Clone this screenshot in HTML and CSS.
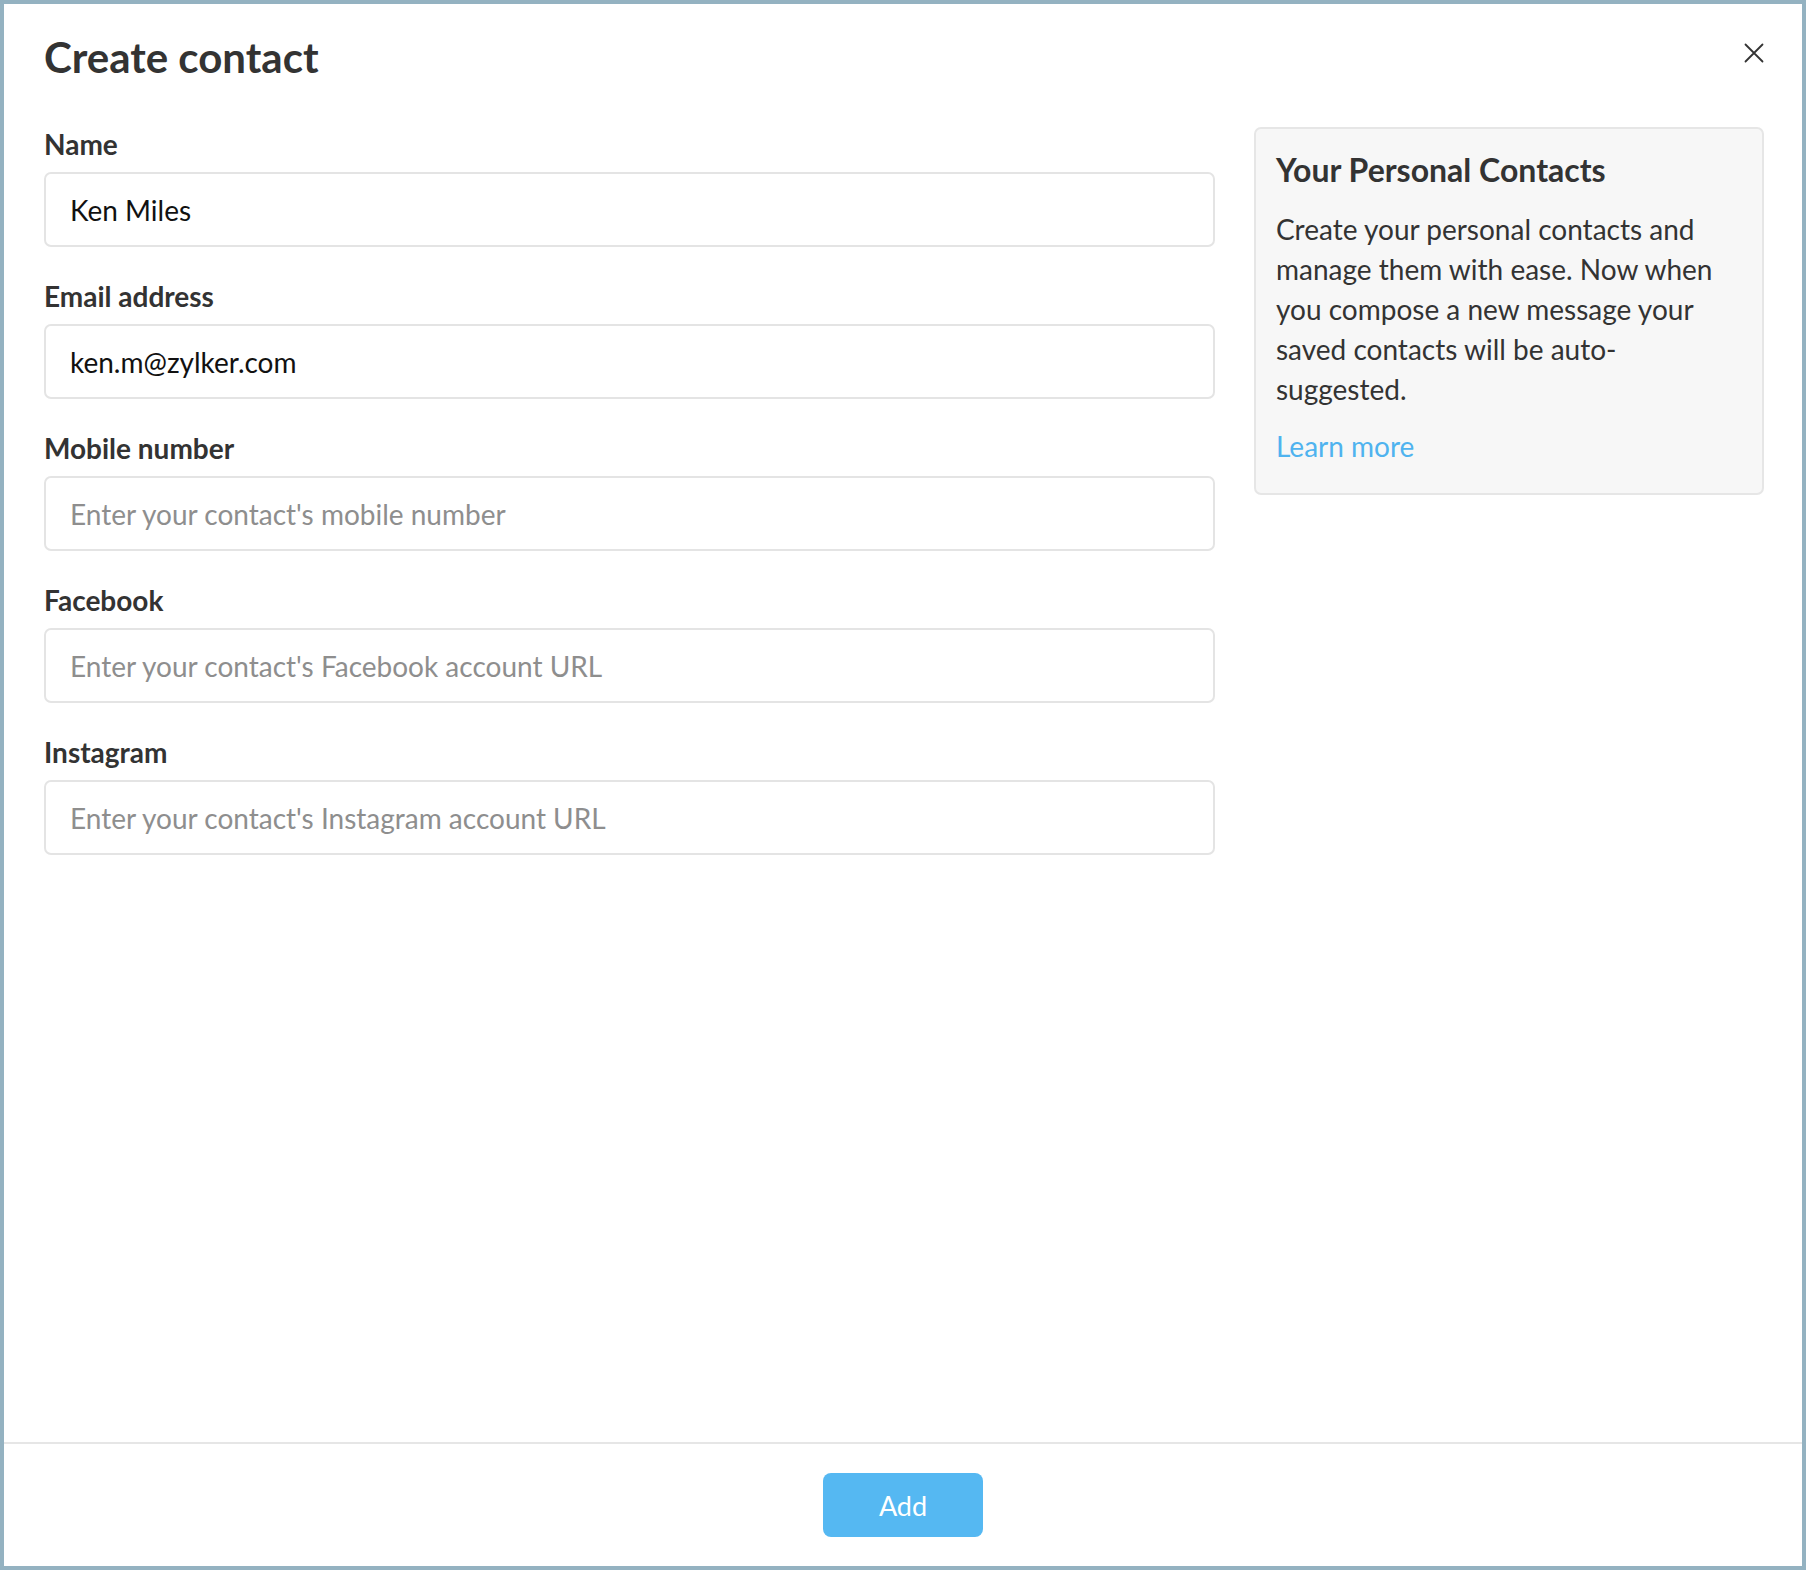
FILE: index.html
```html
<!DOCTYPE html>
<html lang="en">
<head>
<meta charset="utf-8">
<title>Create contact</title>
<link rel="stylesheet" href="styles.css">
</head>
<body>
<div class="dialog">
  <div class="dialog-body">
    <header class="dialog-header">
      <h1 class="dialog-title">Create contact</h1>
      <button class="close-btn" type="button" aria-label="Close">
        <svg viewBox="0 0 20 20" width="20" height="20"><path d="M1.5 1.5 L18.5 18.5 M18.5 1.5 L1.5 18.5" stroke="#333" stroke-width="1.8" fill="none" stroke-linecap="round"/></svg>
      </button>
    </header>
    <div class="dialog-content">
      <form class="form">
        <div class="field">
          <label class="field-label" for="f-name">Name</label>
          <input class="field-input" id="f-name" type="text" value="Ken Miles">
        </div>
        <div class="field">
          <label class="field-label" for="f-email">Email address</label>
          <input class="field-input" id="f-email" type="text" value="ken.m@zylker.com">
        </div>
        <div class="field">
          <label class="field-label" for="f-mobile">Mobile number</label>
          <input class="field-input" id="f-mobile" type="text" placeholder="Enter your contact's mobile number">
        </div>
        <div class="field">
          <label class="field-label" for="f-fb">Facebook</label>
          <input class="field-input" id="f-fb" type="text" placeholder="Enter your contact's Facebook account URL">
        </div>
        <div class="field">
          <label class="field-label" for="f-ig">Instagram</label>
          <input class="field-input" id="f-ig" type="text" placeholder="Enter your contact's Instagram account URL">
        </div>
      </form>
      <aside class="info-panel">
        <h2 class="info-title">Your Personal Contacts</h2>
        <p class="info-text">Create your personal contacts and manage them with ease. Now when you compose a new message your saved contacts will be auto-suggested.</p>
        <a class="info-link" href="#">Learn more</a>
      </aside>
    </div>
  </div>
  <footer class="dialog-footer">
    <button class="btn-primary" type="button">Add</button>
  </footer>
</div>
</body>
</html>
```

FILE: styles.css
```css
html, body {
  margin: 0;
  padding: 0;
  height: 100%;
}

body {
  font-family: Lato, "Open Sans", "Liberation Sans", sans-serif;
  color: #333;
  background: #94b2c1;
}

.dialog {
  box-sizing: border-box;
  height: 100vh;
  border: 4px solid #94b2c1;
  background: #fff;
  display: flex;
  flex-direction: column;
}

.dialog-body {
  flex: 1;
  padding: 28px 38px 0 40px;
}

.dialog-header {
  display: flex;
  justify-content: space-between;
  align-items: flex-start;
}

.dialog-title {
  margin: 0;
  font-size: 42px;
  line-height: 50px;
  font-weight: 700;
  color: #333;
}

.close-btn {
  margin-top: 11px;
  padding: 0;
  border: 0;
  background: none;
  width: 20px;
  height: 20px;
  cursor: pointer;
}

.close-btn svg {
  display: block;
}

.dialog-content {
  margin-top: 45px;
  display: grid;
  grid-template-columns: 1fr 510px;
  column-gap: 39px;
  align-items: start;
}

.form {
  display: flex;
  flex-direction: column;
}

.field {
  display: flex;
  flex-direction: column;
  margin-bottom: 32px;
}

.field-label {
  font-size: 28px;
  line-height: 34px;
  font-weight: 700;
  color: #333;
  margin-bottom: 11px;
}

.field-input {
  box-sizing: border-box;
  height: 75px;
  width: 100%;
  border: 2px solid #e4e4e4;
  border-radius: 7px;
  padding: 0 24px;
  font-family: Lato, "Open Sans", "Liberation Sans", sans-serif;
  font-size: 28px;
  color: #111;
  background: #fff;
  outline: none;
}

.field-input::placeholder {
  color: #8e8e8e;
  opacity: 1;
}

.info-panel {
  box-sizing: border-box;
  border: 2px solid #e6e6e6;
  border-radius: 7px;
  background: #f7f7f7;
  padding: 22px 30px 27px 20px;
}

.info-title {
  margin: 0;
  font-size: 32px;
  line-height: 37px;
  font-weight: 700;
  color: #333;
}

.info-text {
  margin: 21px 0 0;
  font-size: 28px;
  line-height: 40px;
  color: #333;
}

.info-link {
  display: block;
  margin-top: 17px;
  font-size: 28px;
  line-height: 40px;
  color: #4fb3ef;
  text-decoration: none;
}

.dialog-footer {
  height: 122px;
  border-top: 2px solid #e6e6e6;
  display: flex;
  align-items: center;
  justify-content: center;
}

.btn-primary {
  width: 160px;
  height: 64px;
  border: 0;
  border-radius: 8px;
  background: #55b8f2;
  color: #fff;
  font-family: Lato, "Open Sans", "Liberation Sans", sans-serif;
  font-size: 27px;
  cursor: pointer;
}
```
